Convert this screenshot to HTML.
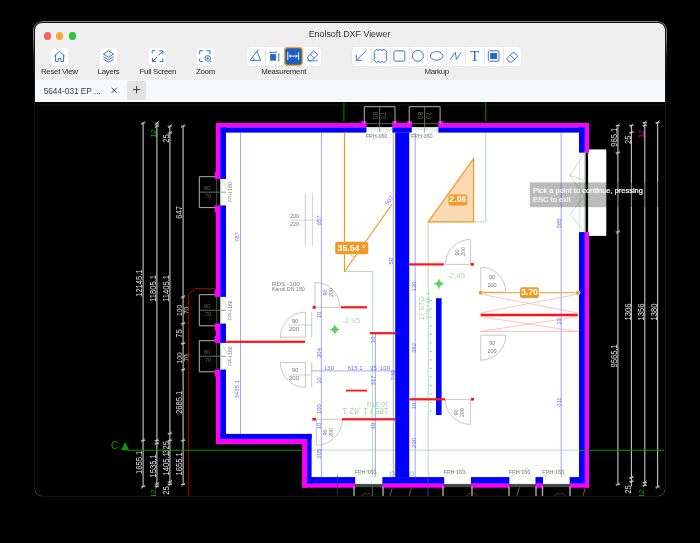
<!DOCTYPE html>
<html><head><meta charset="utf-8">
<style>
html,body{margin:0;padding:0;background:#000;width:700px;height:543px;overflow:hidden;font-family:"Liberation Sans",sans-serif;}
#win{position:absolute;left:35px;top:23.2px;width:630px;height:473.3px;border-radius:7px;background:#EEEFEE;overflow:hidden;box-shadow:0 0 0 0.6px #2a2222;}
#inner{position:absolute;left:-1px;top:-1.2px;width:631px;height:475px;}
#outl{position:absolute;left:33.3px;top:21.3px;width:631.5px;height:60px;border:1px solid #858585;border-bottom:none;border-radius:9px 9px 0 0;-webkit-mask-image:linear-gradient(to bottom,#000 0,#000 25%,rgba(0,0,0,0.25) 60%,rgba(0,0,0,0.0) 100%);}
.abs{position:absolute;}
.dot{position:absolute;width:7.5px;height:7.5px;border-radius:50%;top:10px;}
.title{position:absolute;left:0;width:631px;top:6.6px;text-align:center;font-size:8.9px;color:#303030;}
.tb{position:absolute;top:25.5px;width:17px;height:17.5px;background:#fff;border-radius:3px;}
.lbl{position:absolute;top:45px;font-size:7.9px;letter-spacing:-0.3px;color:#2c2c2c;white-space:nowrap;text-align:center;}
.seg{position:absolute;top:25.3px;height:18.3px;background:#fff;border-radius:4px;box-shadow:0 0 0 0.6px #E2E3E2;}
.sd{position:absolute;top:0;width:1px;height:18px;background:#e6e6e6;}
#tabbar{position:absolute;left:0;top:58.2px;width:631px;height:21.4px;background:#F7F8F9;}
#canvas{position:absolute;left:0;top:79.6px;width:631px;height:396px;background:#000;overflow:hidden;}
svg text{font-family:"Liberation Sans",sans-serif;}
</style></head>
<body>
<div id="outl"></div>
<div id="win"><div id="inner" style="will-change:transform">
  <div class="dot" style="left:9.6px;background:#FE5F57;"></div>
  <div class="dot" style="left:21.9px;background:#F5A838;"></div>
  <div class="dot" style="left:34.5px;background:#27C63F;"></div>
  <div class="title">Enolsoft DXF Viewer</div>

  <div class="tb" style="left:16.7px;"><svg width="17" height="17.5" viewBox="0 0 17 17.5"><path d="M3.6 7.9 L8.4 3.3 L13.4 7.9 M4.6 7 V13.5 H7.1 V10.6 H9.9 V13.5 H12.6 V7" fill="none" stroke="#3a6fd0" stroke-width="1" stroke-linejoin="round" stroke-linecap="round"/></svg></div>
  <div class="lbl" style="left:6.8px;width:37px;">Reset View</div>
  <div class="tb" style="left:66px;"><svg width="17" height="17.5" viewBox="0 0 17 17.5"><path d="M8.5 2.9 L13.6 6.1 L8.5 9.3 L3.4 6.1 Z M3.4 8.6 L8.5 11.8 L13.6 8.6 M3.4 11.1 L8.5 14.3 L13.6 11.1" fill="none" stroke="#3a6fd0" stroke-width="1" stroke-linejoin="round"/></svg></div>
  <div class="lbl" style="left:63.3px;width:22.5px;">Layers</div>
  <div class="tb" style="left:115.3px;"><svg width="17" height="17.5" viewBox="0 0 17 17.5"><path d="M3.2 5.6 V2.6 H6.2 M10.2 2.9 H13.9 V6.5 M13.9 2.9 L9.4 7.4 M3.4 10 V13.6 H7 M3.4 13.6 L7.9 9.1 M13.9 10.4 V13.6 H10.7" fill="none" stroke="#3a6fd0" stroke-width="1"/></svg></div>
  <div class="lbl" style="left:104.9px;width:38px;">Full Screen</div>
  <div class="tb" style="left:163px;"><svg width="17" height="17.5" viewBox="0 0 17 17.5"><path d="M2.7 6.1 V2.7 H6 M9.6 2.7 H13 V6.1 M2.7 10.5 V13.6 H6" fill="none" stroke="#3a6fd0" stroke-width="1"/><circle cx="10.7" cy="10.4" r="2.8" fill="none" stroke="#3a6fd0" stroke-width="1"/><path d="M12.7 12.4 L14.3 14 M9.3 10.4 H12.1 M10.7 9 V11.8" stroke="#3a6fd0" stroke-width="1"/></svg></div>
  <div class="lbl" style="left:161.7px;width:19.6px;">Zoom</div>

  <!-- measurement -->
  <div class="seg" style="left:212.7px;width:74.3px;">
    <div class="sd" style="left:18.3px"></div><div class="sd" style="left:37px"></div><div class="sd" style="left:55.8px"></div>
  </div>
  <div class="lbl" style="left:226.6px;width:46.2px;">Measurement</div>

  <!-- markup -->
  <div class="seg" style="left:318.4px;width:169px;">
    <div class="sd" style="left:18.3px"></div><div class="sd" style="left:37.2px"></div><div class="sd" style="left:56.2px"></div><div class="sd" style="left:74.7px"></div><div class="sd" style="left:94px"></div><div class="sd" style="left:113px"></div><div class="sd" style="left:131.9px"></div><div class="sd" style="left:150.7px"></div>
  </div>
  <div class="lbl" style="left:390.2px;width:25px;">Markup</div>

  <div id="tabbar">
    <div class="abs" style="left:0;top:0;width:92px;height:21.6px;background:#F8F9FA;"></div>
    <div class="abs" style="left:9.7px;top:6.6px;font-size:8.25px;color:#3a3a3a;white-space:nowrap;">5644-031 EP ...</div>
    <svg class="abs" style="left:0;top:0" width="140" height="22" viewBox="34 80 140 22"><path d="M111.7 87.8 L116.7 92.8 M116.7 87.8 L111.7 92.8" stroke="#2a2a2a" stroke-width="0.9"/></svg>
    <div class="abs" style="left:92.7px;top:1px;width:19.1px;height:18.5px;background:#E3E3E3;"></div>
    <svg class="abs" style="left:0;top:0" width="140" height="22" viewBox="34 80 140 22"><path d="M132.9 89.6 H140.3 M136.6 85.9 V93.3" stroke="#2a2a2a" stroke-width="0.9"/></svg>
  </div>
  <div class="abs" style="left:0;top:78.8px;width:631px;height:1px;background:#FFFFFF;"></div>
  <div id="canvas" style="will-change:transform"><svg width="631" height="395.4" viewBox="34 101.6 631 395.4" style="position:absolute;left:0;top:0">
<line x1="35.00" y1="104.70" x2="665.00" y2="104.70" stroke="#1A1A1A" stroke-width="1" />
<polygon points="220.3,126.5 584.8,126.5 584.8,483 307.2,483 307.2,438.6 220.3,438.6" fill="#fff"/>
<rect x="579.00" y="149.00" width="27.30" height="86.50" fill="#fff" />
<line x1="240.50" y1="132.30" x2="240.50" y2="433.50" stroke="#8080FF" stroke-width="0.7" />
<line x1="321.40" y1="132.30" x2="321.40" y2="476.70" stroke="#8080FF" stroke-width="0.7" />
<line x1="393.30" y1="132.30" x2="393.30" y2="476.70" stroke="#8080FF" stroke-width="0.7" />
<line x1="561.20" y1="132.30" x2="561.20" y2="476.70" stroke="#8080FF" stroke-width="0.7" />
<line x1="415.20" y1="132.30" x2="415.20" y2="476.70" stroke="#8080FF" stroke-width="0.7" />
<line x1="375.40" y1="332.00" x2="375.40" y2="476.70" stroke="#8080FF" stroke-width="0.7" />
<line x1="485.80" y1="132.00" x2="485.80" y2="221.40" stroke="#A6D2A6" stroke-width="0.8" />
<line x1="428.20" y1="221.40" x2="486.00" y2="221.40" stroke="#A6D2A6" stroke-width="0.8" />
<line x1="428.20" y1="221.40" x2="428.20" y2="476.70" stroke="#A6D2A6" stroke-width="0.8" />
<line x1="344.50" y1="271.10" x2="373.00" y2="271.10" stroke="#A6D2A6" stroke-width="0.8" />
<line x1="372.60" y1="271.10" x2="372.60" y2="476.70" stroke="#A6D2A6" stroke-width="0.8" />
<line x1="307.20" y1="449.70" x2="584.80" y2="449.70" stroke="#A6D2A6" stroke-width="0.8" />
<line x1="429.70" y1="300.00" x2="432.00" y2="300.00" stroke="#7FBF7F" stroke-width="0.8" />
<line x1="429.70" y1="308.50" x2="432.00" y2="308.50" stroke="#7FBF7F" stroke-width="0.8" />
<line x1="429.70" y1="317.00" x2="432.00" y2="317.00" stroke="#7FBF7F" stroke-width="0.8" />
<line x1="429.70" y1="325.50" x2="432.00" y2="325.50" stroke="#7FBF7F" stroke-width="0.8" />
<line x1="429.70" y1="334.00" x2="432.00" y2="334.00" stroke="#7FBF7F" stroke-width="0.8" />
<line x1="429.70" y1="342.50" x2="432.00" y2="342.50" stroke="#7FBF7F" stroke-width="0.8" />
<line x1="429.70" y1="351.00" x2="432.00" y2="351.00" stroke="#7FBF7F" stroke-width="0.8" />
<line x1="429.70" y1="359.50" x2="432.00" y2="359.50" stroke="#7FBF7F" stroke-width="0.8" />
<line x1="429.70" y1="368.00" x2="432.00" y2="368.00" stroke="#7FBF7F" stroke-width="0.8" />
<line x1="429.70" y1="376.50" x2="432.00" y2="376.50" stroke="#7FBF7F" stroke-width="0.8" />
<line x1="429.70" y1="385.00" x2="432.00" y2="385.00" stroke="#7FBF7F" stroke-width="0.8" />
<line x1="429.70" y1="393.50" x2="432.00" y2="393.50" stroke="#7FBF7F" stroke-width="0.8" />
<line x1="429.70" y1="402.00" x2="432.00" y2="402.00" stroke="#7FBF7F" stroke-width="0.8" />
<line x1="429.70" y1="410.50" x2="432.00" y2="410.50" stroke="#7FBF7F" stroke-width="0.8" />
<line x1="311.60" y1="370.50" x2="395.00" y2="370.50" stroke="#8080FF" stroke-width="0.7" />
<rect x="216.00" y="122.60" width="150.50" height="4.40" fill="#FF00FF" />
<rect x="220.30" y="127.00" width="146.20" height="5.20" fill="#0000FF" />
<rect x="392.30" y="122.60" width="19.50" height="4.40" fill="#FF00FF" />
<rect x="392.30" y="127.00" width="19.50" height="5.20" fill="#0000FF" />
<rect x="438.30" y="122.60" width="150.70" height="4.40" fill="#FF00FF" />
<rect x="438.30" y="127.00" width="146.50" height="5.20" fill="#0000FF" />
<rect x="361.30" y="120.80" width="5.00" height="2.20" fill="#FF00FF" />
<rect x="392.30" y="120.80" width="5.00" height="2.20" fill="#FF00FF" />
<rect x="407.00" y="120.80" width="5.00" height="2.20" fill="#FF00FF" />
<rect x="438.30" y="120.80" width="5.00" height="2.20" fill="#FF00FF" />
<rect x="584.80" y="122.60" width="4.20" height="29.70" fill="#FF00FF" />
<rect x="579.00" y="127.00" width="5.80" height="25.30" fill="#0000FF" />
<rect x="584.80" y="231.70" width="4.20" height="255.60" fill="#FF00FF" />
<rect x="579.00" y="231.70" width="5.80" height="251.30" fill="#0000FF" />
<rect x="216.00" y="122.60" width="4.30" height="55.90" fill="#FF00FF" />
<rect x="220.30" y="127.00" width="5.70" height="51.50" fill="#0000FF" />
<rect x="216.00" y="205.00" width="4.30" height="91.50" fill="#FF00FF" />
<rect x="220.30" y="205.00" width="5.70" height="91.50" fill="#0000FF" />
<rect x="216.00" y="323.20" width="4.30" height="19.30" fill="#FF00FF" />
<rect x="220.30" y="323.20" width="5.70" height="19.30" fill="#0000FF" />
<rect x="216.00" y="369.20" width="4.30" height="74.50" fill="#FF00FF" />
<rect x="220.30" y="369.20" width="5.70" height="69.40" fill="#0000FF" />
<rect x="214.70" y="171.50" width="1.50" height="7.00" fill="#FF00FF" />
<rect x="214.70" y="205.00" width="1.50" height="7.00" fill="#FF00FF" />
<rect x="214.70" y="289.50" width="1.50" height="7.00" fill="#FF00FF" />
<rect x="214.70" y="323.20" width="1.50" height="7.00" fill="#FF00FF" />
<rect x="214.70" y="335.50" width="1.50" height="7.00" fill="#FF00FF" />
<rect x="214.70" y="369.20" width="1.50" height="7.00" fill="#FF00FF" />
<rect x="216.00" y="438.60" width="91.20" height="5.10" fill="#FF00FF" />
<rect x="220.30" y="433.50" width="91.30" height="5.10" fill="#0000FF" />
<rect x="302.10" y="438.60" width="5.10" height="48.70" fill="#FF00FF" />
<rect x="307.20" y="433.50" width="4.40" height="49.50" fill="#0000FF" />
<rect x="302.10" y="483.00" width="53.30" height="4.30" fill="#FF00FF" />
<rect x="307.20" y="476.70" width="48.20" height="6.30" fill="#0000FF" />
<rect x="382.20" y="483.00" width="62.20" height="4.30" fill="#FF00FF" />
<rect x="382.20" y="476.70" width="62.20" height="6.30" fill="#0000FF" />
<rect x="471.00" y="483.00" width="38.60" height="4.30" fill="#FF00FF" />
<rect x="471.00" y="476.70" width="38.60" height="6.30" fill="#0000FF" />
<rect x="535.30" y="483.00" width="7.90" height="4.30" fill="#FF00FF" />
<rect x="535.30" y="476.70" width="7.90" height="6.30" fill="#0000FF" />
<rect x="569.40" y="483.00" width="19.60" height="4.30" fill="#FF00FF" />
<rect x="569.40" y="476.70" width="15.40" height="6.30" fill="#0000FF" />
<rect x="353.60" y="486.00" width="1.80" height="2.30" fill="#FF00FF" />
<rect x="382.20" y="486.00" width="1.80" height="2.30" fill="#FF00FF" />
<rect x="442.60" y="486.00" width="1.80" height="2.30" fill="#FF00FF" />
<rect x="471.00" y="486.00" width="1.80" height="2.30" fill="#FF00FF" />
<rect x="507.80" y="486.00" width="1.80" height="2.30" fill="#FF00FF" />
<rect x="535.30" y="486.00" width="1.80" height="2.30" fill="#FF00FF" />
<rect x="541.40" y="486.00" width="1.80" height="2.30" fill="#FF00FF" />
<rect x="569.40" y="486.00" width="1.80" height="2.30" fill="#FF00FF" />
<rect x="395.20" y="132.00" width="14.00" height="345.00" fill="#0000FF" />
<rect x="436.00" y="297.80" width="5.60" height="116.80" fill="#0000FF" />
<line x1="586.80" y1="152.30" x2="586.80" y2="231.70" stroke="#000" stroke-width="2.6" />
<path d="M584.3 153 L570 175 L584.3 180 M584.3 196 L570 214 L584.3 231 M570 175 L584.3 196" stroke="#A6D2A6" stroke-width="0.7" fill="none" />
<line x1="584.40" y1="152.30" x2="584.40" y2="231.70" stroke="#C8C8C8" stroke-width="0.8" />
<line x1="579.80" y1="152.30" x2="579.80" y2="231.70" stroke="#C8D8C8" stroke-width="0.6" />
<path d="M364.3 123 V106.3 H395 V123" stroke="#B2B2B2" stroke-width="1" fill="none" />
<line x1="365.30" y1="123.20" x2="394.00" y2="123.20" stroke="#5E7E6E" stroke-width="0.8" />
<line x1="379.65" y1="106.30" x2="379.65" y2="132.00" stroke="#6E8E7E" stroke-width="0.8" />
<line x1="366.50" y1="127.20" x2="392.30" y2="127.20" stroke="#B2B2B2" stroke-width="0.6" />
<line x1="366.50" y1="128.70" x2="392.30" y2="128.70" stroke="#A6D2A6" stroke-width="0.6" />
<path d="M366.5 132 L372.5 139 L392.3 128.7" stroke="#A6D2A6" stroke-width="0.6" fill="none" />
<text x="373.15" y="115.00" font-size="6.5" fill="#7A5A5A" text-anchor="middle" transform="rotate(90 373.15 115.00)" >80</text>
<text x="381.15" y="115.00" font-size="6.5" fill="#7A5A5A" text-anchor="middle" transform="rotate(90 381.15 115.00)" >70</text>
<text x="376.50" y="138.00" font-size="5.5" fill="#7A7A7A" text-anchor="middle" >FPH 160</text>
<path d="M409.2 123 V106.3 H440.1 V123" stroke="#B2B2B2" stroke-width="1" fill="none" />
<line x1="410.20" y1="123.20" x2="439.10" y2="123.20" stroke="#5E7E6E" stroke-width="0.8" />
<line x1="424.65" y1="106.30" x2="424.65" y2="132.00" stroke="#6E8E7E" stroke-width="0.8" />
<line x1="411.80" y1="127.20" x2="438.30" y2="127.20" stroke="#B2B2B2" stroke-width="0.6" />
<line x1="411.80" y1="128.70" x2="438.30" y2="128.70" stroke="#A6D2A6" stroke-width="0.6" />
<path d="M411.8 132 L417.8 139 L438.3 128.7" stroke="#A6D2A6" stroke-width="0.6" fill="none" />
<text x="418.15" y="115.00" font-size="6.5" fill="#7A5A5A" text-anchor="middle" transform="rotate(90 418.15 115.00)" >80</text>
<text x="426.15" y="115.00" font-size="6.5" fill="#7A5A5A" text-anchor="middle" transform="rotate(90 426.15 115.00)" >70</text>
<text x="421.80" y="138.00" font-size="5.5" fill="#7A7A7A" text-anchor="middle" >FPH 160</text>
<path d="M215 176.3 H199.3 V207.2 H215" stroke="#B2B2B2" stroke-width="1" fill="none" />
<line x1="199.30" y1="191.75" x2="226.00" y2="191.75" stroke="#6E8E7E" stroke-width="0.8" />
<line x1="216.70" y1="178.50" x2="216.70" y2="205.00" stroke="#4E6E5E" stroke-width="0.8" />
<line x1="220.80" y1="178.50" x2="220.80" y2="205.00" stroke="#C8C8C8" stroke-width="1" />
<path d="M221.5 178.5 L227.5 189.75" stroke="#A6D2A6" stroke-width="0.6" fill="none" />
<text x="207.00" y="189.75" font-size="5.5" fill="#7A5A5A" text-anchor="middle" >80</text>
<text x="208.00" y="197.75" font-size="5.5" fill="#7A5A5A" text-anchor="middle" >70</text>
<text x="232.00" y="191.75" font-size="5" fill="#7A7A7A" text-anchor="middle" transform="rotate(-90 232.00 191.75)" >FPH 160</text>
<path d="M215 294.3 H199.3 V325.4 H215" stroke="#B2B2B2" stroke-width="1" fill="none" />
<line x1="199.30" y1="309.85" x2="226.00" y2="309.85" stroke="#6E8E7E" stroke-width="0.8" />
<line x1="216.70" y1="296.50" x2="216.70" y2="323.20" stroke="#4E6E5E" stroke-width="0.8" />
<line x1="220.80" y1="296.50" x2="220.80" y2="323.20" stroke="#C8C8C8" stroke-width="1" />
<path d="M221.5 296.5 L227.5 307.85" stroke="#A6D2A6" stroke-width="0.6" fill="none" />
<text x="207.00" y="307.85" font-size="5.5" fill="#7A5A5A" text-anchor="middle" >80</text>
<text x="208.00" y="315.85" font-size="5.5" fill="#7A5A5A" text-anchor="middle" >70</text>
<text x="232.00" y="309.85" font-size="5" fill="#7A7A7A" text-anchor="middle" transform="rotate(-90 232.00 309.85)" >FPH 160</text>
<path d="M215 340.3 H199.3 V371.4 H215" stroke="#B2B2B2" stroke-width="1" fill="none" />
<line x1="199.30" y1="355.85" x2="226.00" y2="355.85" stroke="#6E8E7E" stroke-width="0.8" />
<line x1="216.70" y1="342.50" x2="216.70" y2="369.20" stroke="#4E6E5E" stroke-width="0.8" />
<line x1="220.80" y1="342.50" x2="220.80" y2="369.20" stroke="#C8C8C8" stroke-width="1" />
<path d="M221.5 342.5 L227.5 353.85" stroke="#A6D2A6" stroke-width="0.6" fill="none" />
<text x="207.00" y="353.85" font-size="5.5" fill="#7A5A5A" text-anchor="middle" >80</text>
<text x="208.00" y="361.85" font-size="5.5" fill="#7A5A5A" text-anchor="middle" >70</text>
<text x="232.00" y="355.85" font-size="5" fill="#7A7A7A" text-anchor="middle" transform="rotate(-90 232.00 355.85)" >FPH 160</text>
<line x1="143.10" y1="122.70" x2="143.10" y2="486.30" stroke="#C8C8C8" stroke-width="1.1" />
<line x1="156.90" y1="122.70" x2="156.90" y2="486.30" stroke="#C8C8C8" stroke-width="1.1" />
<line x1="169.90" y1="125.70" x2="169.90" y2="484.20" stroke="#C8C8C8" stroke-width="1.1" />
<line x1="183.10" y1="125.70" x2="183.10" y2="484.20" stroke="#C8C8C8" stroke-width="1.1" />
<line x1="140.90" y1="122.70" x2="145.30" y2="122.70" stroke="#C8C8C8" stroke-width="0.9" />
<path d="M141.29999999999998 124.5 L144.9 120.9" stroke="#C8C8C8" stroke-width="0.9" fill="none" />
<line x1="154.70" y1="122.70" x2="159.10" y2="122.70" stroke="#C8C8C8" stroke-width="0.9" />
<path d="M155.1 124.5 L158.70000000000002 120.9" stroke="#C8C8C8" stroke-width="0.9" fill="none" />
<line x1="154.70" y1="125.70" x2="159.10" y2="125.70" stroke="#C8C8C8" stroke-width="0.9" />
<path d="M155.1 127.5 L158.70000000000002 123.9" stroke="#C8C8C8" stroke-width="0.9" fill="none" />
<line x1="167.70" y1="125.70" x2="172.10" y2="125.70" stroke="#C8C8C8" stroke-width="0.9" />
<path d="M168.1 127.5 L171.70000000000002 123.9" stroke="#C8C8C8" stroke-width="0.9" fill="none" />
<line x1="167.70" y1="132.60" x2="172.10" y2="132.60" stroke="#C8C8C8" stroke-width="0.9" />
<path d="M168.1 134.4 L171.70000000000002 130.79999999999998" stroke="#C8C8C8" stroke-width="0.9" fill="none" />
<line x1="180.90" y1="125.70" x2="185.30" y2="125.70" stroke="#C8C8C8" stroke-width="0.9" />
<path d="M181.29999999999998 127.5 L184.9 123.9" stroke="#C8C8C8" stroke-width="0.9" fill="none" />
<line x1="180.90" y1="296.60" x2="185.30" y2="296.60" stroke="#C8C8C8" stroke-width="0.9" />
<path d="M181.29999999999998 298.40000000000003 L184.9 294.8" stroke="#C8C8C8" stroke-width="0.9" fill="none" />
<line x1="180.90" y1="323.30" x2="185.30" y2="323.30" stroke="#C8C8C8" stroke-width="0.9" />
<path d="M181.29999999999998 325.1 L184.9 321.5" stroke="#C8C8C8" stroke-width="0.9" fill="none" />
<line x1="180.90" y1="343.00" x2="185.30" y2="343.00" stroke="#C8C8C8" stroke-width="0.9" />
<path d="M181.29999999999998 344.8 L184.9 341.2" stroke="#C8C8C8" stroke-width="0.9" fill="none" />
<line x1="180.90" y1="369.30" x2="185.30" y2="369.30" stroke="#C8C8C8" stroke-width="0.9" />
<path d="M181.29999999999998 371.1 L184.9 367.5" stroke="#C8C8C8" stroke-width="0.9" fill="none" />
<line x1="180.90" y1="440.00" x2="185.30" y2="440.00" stroke="#C8C8C8" stroke-width="0.9" />
<path d="M181.29999999999998 441.8 L184.9 438.2" stroke="#C8C8C8" stroke-width="0.9" fill="none" />
<line x1="167.70" y1="433.00" x2="172.10" y2="433.00" stroke="#C8C8C8" stroke-width="0.9" />
<path d="M168.1 434.8 L171.70000000000002 431.2" stroke="#C8C8C8" stroke-width="0.9" fill="none" />
<line x1="167.70" y1="440.00" x2="172.10" y2="440.00" stroke="#C8C8C8" stroke-width="0.9" />
<path d="M168.1 441.8 L171.70000000000002 438.2" stroke="#C8C8C8" stroke-width="0.9" fill="none" />
<line x1="140.90" y1="440.00" x2="145.30" y2="440.00" stroke="#C8C8C8" stroke-width="0.9" />
<path d="M141.29999999999998 441.8 L144.9 438.2" stroke="#C8C8C8" stroke-width="0.9" fill="none" />
<line x1="154.70" y1="440.00" x2="159.10" y2="440.00" stroke="#C8C8C8" stroke-width="0.9" />
<path d="M155.1 441.8 L158.70000000000002 438.2" stroke="#C8C8C8" stroke-width="0.9" fill="none" />
<line x1="154.70" y1="443.00" x2="159.10" y2="443.00" stroke="#C8C8C8" stroke-width="0.9" />
<path d="M155.1 444.8 L158.70000000000002 441.2" stroke="#C8C8C8" stroke-width="0.9" fill="none" />
<line x1="140.90" y1="486.30" x2="145.30" y2="486.30" stroke="#C8C8C8" stroke-width="0.9" />
<path d="M141.29999999999998 488.1 L144.9 484.5" stroke="#C8C8C8" stroke-width="0.9" fill="none" />
<line x1="154.70" y1="486.30" x2="159.10" y2="486.30" stroke="#C8C8C8" stroke-width="0.9" />
<path d="M155.1 488.1 L158.70000000000002 484.5" stroke="#C8C8C8" stroke-width="0.9" fill="none" />
<line x1="154.70" y1="483.50" x2="159.10" y2="483.50" stroke="#C8C8C8" stroke-width="0.9" />
<path d="M155.1 485.3 L158.70000000000002 481.7" stroke="#C8C8C8" stroke-width="0.9" fill="none" />
<line x1="167.70" y1="484.20" x2="172.10" y2="484.20" stroke="#C8C8C8" stroke-width="0.9" />
<path d="M168.1 486.0 L171.70000000000002 482.4" stroke="#C8C8C8" stroke-width="0.9" fill="none" />
<line x1="167.70" y1="481.50" x2="172.10" y2="481.50" stroke="#C8C8C8" stroke-width="0.9" />
<path d="M168.1 483.3 L171.70000000000002 479.7" stroke="#C8C8C8" stroke-width="0.9" fill="none" />
<line x1="180.90" y1="484.20" x2="185.30" y2="484.20" stroke="#C8C8C8" stroke-width="0.9" />
<path d="M181.29999999999998 486.0 L184.9 482.4" stroke="#C8C8C8" stroke-width="0.9" fill="none" />
<text x="142.30" y="282.70" font-size="8.588" fill="#E2E2E2" text-anchor="middle" transform="rotate(-90 142.30 282.70)" textLength="27.47" lengthAdjust="spacingAndGlyphs">12145.1</text>
<text x="142.30" y="462.00" font-size="8.588" fill="#E2E2E2" text-anchor="middle" transform="rotate(-90 142.30 462.00)" textLength="23.24" lengthAdjust="spacingAndGlyphs">1655.1</text>
<text x="156.10" y="288.00" font-size="8.588" fill="#E2E2E2" text-anchor="middle" transform="rotate(-90 156.10 288.00)" textLength="26.91" lengthAdjust="spacingAndGlyphs">11805.1</text>
<text x="156.10" y="465.50" font-size="8.588" fill="#E2E2E2" text-anchor="middle" transform="rotate(-90 156.10 465.50)" textLength="23.24" lengthAdjust="spacingAndGlyphs">1535.1</text>
<text x="156.10" y="133.00" font-size="7.2" fill="#00B000" text-anchor="middle" transform="rotate(-90 156.10 133.00)" >12</text>
<text x="156.10" y="493.00" font-size="7.2" fill="#00B000" text-anchor="middle" transform="rotate(-90 156.10 493.00)" >12</text>
<text x="169.10" y="138.00" font-size="8.588" fill="#E2E2E2" text-anchor="middle" transform="rotate(-90 169.10 138.00)" textLength="8.45" lengthAdjust="spacingAndGlyphs">25</text>
<text x="169.10" y="288.00" font-size="8.588" fill="#E2E2E2" text-anchor="middle" transform="rotate(-90 169.10 288.00)" textLength="26.91" lengthAdjust="spacingAndGlyphs">11405.1</text>
<text x="169.10" y="447.00" font-size="8.588" fill="#E2E2E2" text-anchor="middle" transform="rotate(-90 169.10 447.00)" textLength="12.68" lengthAdjust="spacingAndGlyphs">325</text>
<text x="169.10" y="463.50" font-size="8.588" fill="#E2E2E2" text-anchor="middle" transform="rotate(-90 169.10 463.50)" textLength="23.24" lengthAdjust="spacingAndGlyphs">1405.1</text>
<text x="169.10" y="490.00" font-size="8.588" fill="#E2E2E2" text-anchor="middle" transform="rotate(-90 169.10 490.00)" textLength="8.45" lengthAdjust="spacingAndGlyphs">25</text>
<text x="182.30" y="212.00" font-size="8.588" fill="#E2E2E2" text-anchor="middle" transform="rotate(-90 182.30 212.00)" textLength="12.68" lengthAdjust="spacingAndGlyphs">647</text>
<text x="181.80" y="310.00" font-size="7.457999999999999" fill="#E2E2E2" text-anchor="middle" transform="rotate(-90 181.80 310.00)" textLength="11.01" lengthAdjust="spacingAndGlyphs">100</text>
<text x="189.50" y="310.00" font-size="7.457999999999999" fill="#E2E2E2" text-anchor="middle" transform="rotate(-90 189.50 310.00)" textLength="7.34" lengthAdjust="spacingAndGlyphs">70</text>
<text x="182.30" y="333.00" font-size="8.588" fill="#E2E2E2" text-anchor="middle" transform="rotate(-90 182.30 333.00)" textLength="8.45" lengthAdjust="spacingAndGlyphs">75</text>
<text x="181.80" y="357.50" font-size="7.457999999999999" fill="#E2E2E2" text-anchor="middle" transform="rotate(-90 181.80 357.50)" textLength="11.01" lengthAdjust="spacingAndGlyphs">100</text>
<text x="189.50" y="357.50" font-size="7.457999999999999" fill="#E2E2E2" text-anchor="middle" transform="rotate(-90 189.50 357.50)" textLength="7.34" lengthAdjust="spacingAndGlyphs">70</text>
<text x="182.30" y="402.00" font-size="8.588" fill="#E2E2E2" text-anchor="middle" transform="rotate(-90 182.30 402.00)" textLength="23.24" lengthAdjust="spacingAndGlyphs">2685.1</text>
<text x="182.30" y="463.50" font-size="8.588" fill="#E2E2E2" text-anchor="middle" transform="rotate(-90 182.30 463.50)" textLength="23.24" lengthAdjust="spacingAndGlyphs">1655.1</text>
<line x1="617.90" y1="125.00" x2="617.90" y2="484.00" stroke="#C8C8C8" stroke-width="1.1" />
<line x1="631.40" y1="125.00" x2="631.40" y2="486.00" stroke="#C8C8C8" stroke-width="1.1" />
<line x1="644.80" y1="122.00" x2="644.80" y2="485.00" stroke="#C8C8C8" stroke-width="1.1" />
<line x1="657.60" y1="122.00" x2="657.60" y2="486.60" stroke="#C8C8C8" stroke-width="1.1" />
<line x1="615.70" y1="125.00" x2="620.10" y2="125.00" stroke="#C8C8C8" stroke-width="0.9" />
<path d="M616.1 126.8 L619.6999999999999 123.2" stroke="#C8C8C8" stroke-width="0.9" fill="none" />
<line x1="615.70" y1="152.30" x2="620.10" y2="152.30" stroke="#C8C8C8" stroke-width="0.9" />
<path d="M616.1 154.10000000000002 L619.6999999999999 150.5" stroke="#C8C8C8" stroke-width="0.9" fill="none" />
<line x1="615.70" y1="231.50" x2="620.10" y2="231.50" stroke="#C8C8C8" stroke-width="0.9" />
<path d="M616.1 233.3 L619.6999999999999 229.7" stroke="#C8C8C8" stroke-width="0.9" fill="none" />
<line x1="615.70" y1="484.00" x2="620.10" y2="484.00" stroke="#C8C8C8" stroke-width="0.9" />
<path d="M616.1 485.8 L619.6999999999999 482.2" stroke="#C8C8C8" stroke-width="0.9" fill="none" />
<line x1="629.20" y1="125.00" x2="633.60" y2="125.00" stroke="#C8C8C8" stroke-width="0.9" />
<path d="M629.6 126.8 L633.1999999999999 123.2" stroke="#C8C8C8" stroke-width="0.9" fill="none" />
<line x1="629.20" y1="132.00" x2="633.60" y2="132.00" stroke="#C8C8C8" stroke-width="0.9" />
<path d="M629.6 133.8 L633.1999999999999 130.2" stroke="#C8C8C8" stroke-width="0.9" fill="none" />
<line x1="629.20" y1="477.20" x2="633.60" y2="477.20" stroke="#C8C8C8" stroke-width="0.9" />
<path d="M629.6 479.0 L633.1999999999999 475.4" stroke="#C8C8C8" stroke-width="0.9" fill="none" />
<line x1="629.20" y1="481.00" x2="633.60" y2="481.00" stroke="#C8C8C8" stroke-width="0.9" />
<path d="M629.6 482.8 L633.1999999999999 479.2" stroke="#C8C8C8" stroke-width="0.9" fill="none" />
<line x1="642.60" y1="122.00" x2="647.00" y2="122.00" stroke="#C8C8C8" stroke-width="0.9" />
<path d="M643.0 123.8 L646.5999999999999 120.2" stroke="#C8C8C8" stroke-width="0.9" fill="none" />
<line x1="642.60" y1="125.00" x2="647.00" y2="125.00" stroke="#C8C8C8" stroke-width="0.9" />
<path d="M643.0 126.8 L646.5999999999999 123.2" stroke="#C8C8C8" stroke-width="0.9" fill="none" />
<line x1="642.60" y1="482.00" x2="647.00" y2="482.00" stroke="#C8C8C8" stroke-width="0.9" />
<path d="M643.0 483.8 L646.5999999999999 480.2" stroke="#C8C8C8" stroke-width="0.9" fill="none" />
<line x1="642.60" y1="485.00" x2="647.00" y2="485.00" stroke="#C8C8C8" stroke-width="0.9" />
<path d="M643.0 486.8 L646.5999999999999 483.2" stroke="#C8C8C8" stroke-width="0.9" fill="none" />
<line x1="655.40" y1="122.00" x2="659.80" y2="122.00" stroke="#C8C8C8" stroke-width="0.9" />
<path d="M655.8000000000001 123.8 L659.4 120.2" stroke="#C8C8C8" stroke-width="0.9" fill="none" />
<line x1="655.40" y1="486.60" x2="659.80" y2="486.60" stroke="#C8C8C8" stroke-width="0.9" />
<path d="M655.8000000000001 488.40000000000003 L659.4 484.8" stroke="#C8C8C8" stroke-width="0.9" fill="none" />
<text x="617.10" y="136.80" font-size="8.588" fill="#E2E2E2" text-anchor="middle" transform="rotate(-90 617.10 136.80)" textLength="19.02" lengthAdjust="spacingAndGlyphs">965.1</text>
<text x="617.10" y="355.50" font-size="8.588" fill="#E2E2E2" text-anchor="middle" transform="rotate(-90 617.10 355.50)" textLength="23.24" lengthAdjust="spacingAndGlyphs">9565.1</text>
<text x="630.60" y="139.40" font-size="8.588" fill="#E2E2E2" text-anchor="middle" transform="rotate(-90 630.60 139.40)" textLength="8.45" lengthAdjust="spacingAndGlyphs">25</text>
<text x="630.60" y="311.60" font-size="8.588" fill="#E2E2E2" text-anchor="middle" transform="rotate(-90 630.60 311.60)" textLength="16.91" lengthAdjust="spacingAndGlyphs">1306</text>
<text x="630.60" y="489.00" font-size="8.588" fill="#E2E2E2" text-anchor="middle" transform="rotate(-90 630.60 489.00)" textLength="8.45" lengthAdjust="spacingAndGlyphs">25</text>
<text x="644.00" y="133.50" font-size="7.2" fill="#C000C0" text-anchor="middle" transform="rotate(-90 644.00 133.50)" >12</text>
<text x="644.00" y="311.60" font-size="8.588" fill="#E2E2E2" text-anchor="middle" transform="rotate(-90 644.00 311.60)" textLength="16.91" lengthAdjust="spacingAndGlyphs">1356</text>
<text x="644.00" y="493.00" font-size="7.2" fill="#00B000" text-anchor="middle" transform="rotate(-90 644.00 493.00)" >12</text>
<text x="656.80" y="311.60" font-size="8.588" fill="#E2E2E2" text-anchor="middle" transform="rotate(-90 656.80 311.60)" textLength="16.91" lengthAdjust="spacingAndGlyphs">1380</text>
<path d="M188.3 497 V294.7 L194.6 288.3 H215.5" stroke="#B00000" stroke-width="1" fill="none" />
<line x1="128.30" y1="449.80" x2="302.10" y2="449.80" stroke="#00A000" stroke-width="1.1" />
<line x1="579.00" y1="449.80" x2="664.00" y2="449.80" stroke="#00A000" stroke-width="1.1" />
<polygon points="125.2,441.7 121.2,449.9 129.1,449.9" fill="#00A000"/>
<text x="114.50" y="448.60" font-size="10" fill="#00A000" text-anchor="middle" >C</text>
<line x1="343.90" y1="102.00" x2="343.90" y2="121.00" stroke="#00A000" stroke-width="0.9" />
<line x1="485.80" y1="102.00" x2="485.80" y2="121.00" stroke="#00A000" stroke-width="0.9" />
<path d="M305.4 311.7 V336.7 H280.4 A25 25 0 0 1 305.4 311.7" stroke="#B2B2B2" stroke-width="0.7" fill="none" />
<path d="M305.4 387 V362 H280.4 A25 25 0 0 0 305.4 387" stroke="#B2B2B2" stroke-width="0.7" fill="none" />
<path d="M315 282 V307 H340 A25 25 0 0 0 315 282" stroke="#B2B2B2" stroke-width="0.7" fill="none" />
<path d="M316.3 444.9 V418.9 H342.3 A26 26 0 0 1 316.3 444.9" stroke="#B2B2B2" stroke-width="0.7" fill="none" />
<path d="M470.4 239 V264 H445.4 A25 25 0 0 1 470.4 239" stroke="#B2B2B2" stroke-width="0.7" fill="none" />
<path d="M480.8 266.8 V291.8 H505.8 A25 25 0 0 0 480.8 266.8" stroke="#B2B2B2" stroke-width="0.7" fill="none" />
<path d="M480.8 359.8 V334.8 H505.8 A25 25 0 0 1 480.8 359.8" stroke="#B2B2B2" stroke-width="0.7" fill="none" />
<path d="M470.4 424 V399 H445.4 A25 25 0 0 0 470.4 424" stroke="#B2B2B2" stroke-width="0.7" fill="none" />
<text x="295.00" y="322.50" font-size="6" fill="#7A7A7A" text-anchor="middle" >90</text>
<text x="294.00" y="331.00" font-size="6" fill="#7A7A7A" text-anchor="middle" >200</text>
<text x="295.00" y="371.50" font-size="6" fill="#7A7A7A" text-anchor="middle" >90</text>
<text x="294.00" y="380.00" font-size="6" fill="#7A7A7A" text-anchor="middle" >200</text>
<line x1="311.70" y1="312.00" x2="311.70" y2="337.00" stroke="#B2B2B2" stroke-width="0.7" />
<line x1="311.70" y1="362.00" x2="311.70" y2="387.00" stroke="#B2B2B2" stroke-width="0.7" />
<line x1="288.40" y1="324.60" x2="311.70" y2="324.60" stroke="#A6D2A6" stroke-width="0.7" />
<line x1="288.40" y1="374.50" x2="311.70" y2="374.50" stroke="#A6D2A6" stroke-width="0.7" />
<text x="459.00" y="252.00" font-size="5.5" fill="#7A7A7A" text-anchor="middle" transform="rotate(-90 459.00 252.00)" >90</text>
<text x="465.00" y="251.00" font-size="5.5" fill="#7A7A7A" text-anchor="middle" transform="rotate(-90 465.00 251.00)" >200</text>
<text x="492.00" y="279.00" font-size="5.5" fill="#7A7A7A" text-anchor="middle" >90</text>
<text x="492.00" y="287.00" font-size="5.5" fill="#7A7A7A" text-anchor="middle" >200</text>
<text x="492.00" y="345.00" font-size="5.5" fill="#7A7A7A" text-anchor="middle" >90</text>
<text x="492.00" y="353.00" font-size="5.5" fill="#7A7A7A" text-anchor="middle" >200</text>
<text x="458.00" y="412.00" font-size="5.5" fill="#7A7A7A" text-anchor="middle" transform="rotate(-90 458.00 412.00)" >90</text>
<text x="464.00" y="412.00" font-size="5.5" fill="#7A7A7A" text-anchor="middle" transform="rotate(-90 464.00 412.00)" >200</text>
<text x="327.00" y="292.00" font-size="5.5" fill="#7A7A7A" text-anchor="middle" transform="rotate(-90 327.00 292.00)" >90</text>
<text x="333.00" y="292.00" font-size="5.5" fill="#7A7A7A" text-anchor="middle" transform="rotate(-90 333.00 292.00)" >200</text>
<text x="327.00" y="432.00" font-size="5.5" fill="#7A7A7A" text-anchor="middle" transform="rotate(-90 327.00 432.00)" >90</text>
<text x="333.00" y="432.00" font-size="5.5" fill="#7A7A7A" text-anchor="middle" transform="rotate(-90 333.00 432.00)" >200</text>
<rect x="225.60" y="340.30" width="79.50" height="2.20" fill="#FF1414" />
<rect x="341.00" y="305.80" width="26.00" height="2.20" fill="#FF1414" />
<rect x="312.60" y="305.40" width="3.00" height="3.00" fill="#FF1414" />
<rect x="369.90" y="331.70" width="25.30" height="2.20" fill="#FF1414" />
<rect x="346.00" y="389.30" width="21.00" height="1.80" fill="#FF1414" />
<rect x="342.00" y="417.80" width="53.30" height="2.20" fill="#FF1414" />
<rect x="312.30" y="417.60" width="3.70" height="2.60" fill="#FF1414" />
<rect x="409.00" y="262.90" width="34.80" height="2.20" fill="#FF1414" />
<rect x="470.80" y="262.60" width="3.00" height="2.80" fill="#FF1414" />
<rect x="409.40" y="397.80" width="35.60" height="2.20" fill="#FF1414" />
<rect x="471.00" y="397.60" width="3.00" height="2.60" fill="#FF1414" />
<rect x="480.60" y="313.35" width="97.10" height="2.50" fill="#FF1414" />
<line x1="480.60" y1="293.70" x2="577.70" y2="312.60" stroke="#FF9A9A" stroke-width="0.6" />
<line x1="480.60" y1="312.60" x2="577.70" y2="293.70" stroke="#FF9A9A" stroke-width="0.6" />
<line x1="480.60" y1="316.30" x2="577.70" y2="331.10" stroke="#FF9A9A" stroke-width="0.6" />
<line x1="480.60" y1="331.10" x2="577.70" y2="316.30" stroke="#FF9A9A" stroke-width="0.6" />
<line x1="480.60" y1="331.10" x2="577.70" y2="331.10" stroke="#FF9A9A" stroke-width="0.6" />
<text x="271.80" y="285.50" font-size="5.8" fill="#7A7A7A" text-anchor="start" textLength="28" lengthAdjust="spacingAndGlyphs">RDS -100</text>
<text x="271.80" y="290.40" font-size="5.8" fill="#7A7A7A" text-anchor="start" textLength="33" lengthAdjust="spacingAndGlyphs">Kanal DN 150</text>
<line x1="305.20" y1="192.60" x2="305.20" y2="245.20" stroke="#B2B2B2" stroke-width="0.6" />
<line x1="312.40" y1="192.60" x2="312.40" y2="245.20" stroke="#B2B2B2" stroke-width="0.6" />
<line x1="290.00" y1="219.80" x2="318.00" y2="219.80" stroke="#B2B2B2" stroke-width="0.6" />
<text x="294.50" y="218.00" font-size="5.5" fill="#7A7A7A" text-anchor="middle" >200</text>
<text x="294.50" y="225.50" font-size="5.5" fill="#7A7A7A" text-anchor="middle" >220</text>
<text x="239.40" y="236.80" font-size="6" fill="#6A6AFF" text-anchor="middle" transform="rotate(-90 239.40 236.80)" >787</text>
<text x="239.40" y="389.00" font-size="6" fill="#6A6AFF" text-anchor="middle" transform="rotate(-90 239.40 389.00)" >3435.1</text>
<text x="321.00" y="220.00" font-size="6" fill="#6A6AFF" text-anchor="middle" transform="rotate(-90 321.00 220.00)" >657</text>
<text x="321.00" y="314.50" font-size="6" fill="#6A6AFF" text-anchor="middle" transform="rotate(-90 321.00 314.50)" >10</text>
<text x="321.00" y="352.60" font-size="6" fill="#6A6AFF" text-anchor="middle" transform="rotate(-90 321.00 352.60)" >304</text>
<text x="321.00" y="380.00" font-size="6" fill="#6A6AFF" text-anchor="middle" transform="rotate(-90 321.00 380.00)" >10</text>
<text x="321.00" y="408.70" font-size="6" fill="#6A6AFF" text-anchor="middle" transform="rotate(-90 321.00 408.70)" >100</text>
<text x="321.00" y="425.50" font-size="6" fill="#6A6AFF" text-anchor="middle" transform="rotate(-90 321.00 425.50)" >10</text>
<text x="321.00" y="453.30" font-size="6" fill="#6A6AFF" text-anchor="middle" transform="rotate(-90 321.00 453.30)" >205</text>
<text x="391.00" y="201.00" font-size="6" fill="#6A6AFF" text-anchor="middle" transform="rotate(-55 391.00 201.00)" >507</text>
<text x="393.00" y="260.70" font-size="6" fill="#6A6AFF" text-anchor="middle" transform="rotate(-90 393.00 260.70)" >50</text>
<text x="416.00" y="286.00" font-size="6" fill="#6A6AFF" text-anchor="middle" transform="rotate(-90 416.00 286.00)" >120</text>
<text x="416.00" y="347.50" font-size="6" fill="#6A6AFF" text-anchor="middle" transform="rotate(-90 416.00 347.50)" >382</text>
<text x="416.00" y="405.50" font-size="6" fill="#6A6AFF" text-anchor="middle" transform="rotate(-90 416.00 405.50)" >10</text>
<text x="416.00" y="442.50" font-size="6" fill="#6A6AFF" text-anchor="middle" transform="rotate(-90 416.00 442.50)" >290</text>
<text x="375.00" y="339.40" font-size="6" fill="#6A6AFF" text-anchor="middle" transform="rotate(-90 375.00 339.40)" >10</text>
<text x="375.00" y="380.00" font-size="6" fill="#6A6AFF" text-anchor="middle" transform="rotate(-90 375.00 380.00)" >317</text>
<text x="375.00" y="425.50" font-size="6" fill="#6A6AFF" text-anchor="middle" transform="rotate(-90 375.00 425.50)" >10</text>
<text x="395.00" y="375.00" font-size="6" fill="#6A6AFF" text-anchor="middle" transform="rotate(-90 395.00 375.00)" >749</text>
<text x="560.60" y="223.00" font-size="6" fill="#6A6AFF" text-anchor="middle" transform="rotate(-90 560.60 223.00)" >685</text>
<text x="560.60" y="401.70" font-size="6" fill="#6A6AFF" text-anchor="middle" transform="rotate(-90 560.60 401.70)" >611</text>
<text x="560.60" y="321.00" font-size="6" fill="#6A6AFF" text-anchor="middle" transform="rotate(-90 560.60 321.00)" >10</text>
<text x="329.00" y="369.60" font-size="6" fill="#6A6AFF" text-anchor="middle" >130</text>
<text x="355.00" y="369.60" font-size="6" fill="#6A6AFF" text-anchor="middle" >615.1</text>
<text x="373.50" y="369.60" font-size="6" fill="#6A6AFF" text-anchor="middle" >25</text>
<text x="385.00" y="369.60" font-size="6" fill="#6A6AFF" text-anchor="middle" >100</text>
<text x="351.00" y="323.00" font-size="8" fill="#A8E6A8" text-anchor="middle" >-2,95</text>
<text x="456.00" y="277.50" font-size="8" fill="#A8E6A8" text-anchor="middle" >-2,45</text>
<polygon points="331.3,329.2 334.8,325.7 338.3,329.2 334.8,332.7" fill="#7CE07C" stroke="#3CB03C" stroke-width="0.6"/>
<line x1="329.80" y1="329.20" x2="339.80" y2="329.20" stroke="#3CB03C" stroke-width="0.6" />
<line x1="334.80" y1="324.20" x2="334.80" y2="334.20" stroke="#3CB03C" stroke-width="0.6" />
<polygon points="435.5,283.4 439,279.9 442.5,283.4 439,286.9" fill="#7CE07C" stroke="#3CB03C" stroke-width="0.6"/>
<line x1="434.00" y1="283.40" x2="444.00" y2="283.40" stroke="#3CB03C" stroke-width="0.6" />
<line x1="439.00" y1="278.40" x2="439.00" y2="288.40" stroke="#3CB03C" stroke-width="0.6" />
<text x="424.00" y="308.00" font-size="7" fill="#A6D2A6" text-anchor="middle" transform="rotate(-90 424.00 308.00)" >17 STG</text>
<text x="430.00" y="305.00" font-size="6" fill="#A6D2A6" text-anchor="middle" transform="rotate(-90 430.00 305.00)" >175 / 28.1</text>
<text x="388.60" y="407.20" font-size="9" fill="#A6D2A6" text-anchor="start" transform="rotate(180 388.60 407.20)" textLength="46" lengthAdjust="spacingAndGlyphs">185 / 1 ,82  1</text>
<text x="388.60" y="401.20" font-size="7.8" fill="#A6D2A6" text-anchor="start" transform="rotate(180 388.60 401.20)" textLength="22" lengthAdjust="spacingAndGlyphs">16 STG</text>
<line x1="344.50" y1="132.30" x2="344.50" y2="271.10" stroke="#F29A26" stroke-width="1.2" />
<line x1="344.50" y1="271.10" x2="392.20" y2="203.60" stroke="#F29A26" stroke-width="1.2" />
<path d="M349.9 254.3 Q352 256 353.6 256.4" stroke="#F29A26" stroke-width="0.7" fill="none" />
<polygon points="428.2,221.4 473.6,158.2 473.6,221.4" fill="#FBD9B2" stroke="#F29A26" stroke-width="1.2"/>
<line x1="480.60" y1="292.30" x2="577.70" y2="292.30" stroke="#F29A26" stroke-width="1" />
<circle cx="480.6" cy="292.3" r="2.3" fill="#F29A26" stroke="#fff" stroke-width="0.6"/>
<circle cx="577.7" cy="292.3" r="2.3" fill="#F29A26" stroke="#fff" stroke-width="0.6"/>
<rect x="335.2" y="241.3" width="33.10" height="12.50" rx="2.2" fill="#F29A26"/>
<text x="351.50" y="250.70" font-size="8.8" font-weight="bold" fill="#fff" text-anchor="middle">35.54 °</text>
<rect x="448.5" y="194.2" width="18.80" height="10.90" rx="2.2" fill="#F29A26"/>
<text x="457.90" y="202.00" font-size="8.8" font-weight="bold" fill="#fff" text-anchor="middle">2.06</text>
<rect x="520" y="286.9" width="18.90" height="10.80" rx="2.2" fill="#F29A26"/>
<text x="529.45" y="294.60" font-size="8.8" font-weight="bold" fill="#fff" text-anchor="middle">3.70</text>
<line x1="354.00" y1="486.00" x2="354.00" y2="497.00" stroke="#A8A8A8" stroke-width="1.4" />
<line x1="383.00" y1="486.00" x2="383.00" y2="497.00" stroke="#A8A8A8" stroke-width="1.4" />
<line x1="443.00" y1="486.00" x2="443.00" y2="497.00" stroke="#A8A8A8" stroke-width="1.4" />
<line x1="472.00" y1="486.00" x2="472.00" y2="497.00" stroke="#A8A8A8" stroke-width="1.4" />
<line x1="509.00" y1="486.00" x2="509.00" y2="497.00" stroke="#A8A8A8" stroke-width="1.4" />
<line x1="536.00" y1="486.00" x2="536.00" y2="497.00" stroke="#A8A8A8" stroke-width="1.4" />
<line x1="542.50" y1="486.00" x2="542.50" y2="497.00" stroke="#A8A8A8" stroke-width="1.4" />
<line x1="570.00" y1="486.00" x2="570.00" y2="497.00" stroke="#A8A8A8" stroke-width="1.4" />
<line x1="389.50" y1="497.00" x2="392.50" y2="487.00" stroke="#A04040" stroke-width="1" />
<line x1="408.50" y1="497.00" x2="411.50" y2="487.00" stroke="#A04040" stroke-width="1" />
<line x1="516.50" y1="497.00" x2="519.50" y2="487.00" stroke="#A04040" stroke-width="1" />
<line x1="582.50" y1="497.00" x2="585.50" y2="487.00" stroke="#A04040" stroke-width="1" />
<line x1="372.60" y1="476.70" x2="372.60" y2="497.00" stroke="#2E8B2E" stroke-width="0.9" />
<line x1="428.00" y1="476.70" x2="428.00" y2="497.00" stroke="#4040C0" stroke-width="0.9" />
<path d="M361 497 Q364 491 367 494 Q370 491 373 497" stroke="#704848" stroke-width="0.8" fill="none" />
<path d="M466 497 Q469 491 472 494 Q475 491 478 497" stroke="#704848" stroke-width="0.8" fill="none" />
<path d="M554 497 Q557 491 560 494 Q563 491 566 497" stroke="#704848" stroke-width="0.8" fill="none" />
<circle cx="392.5" cy="473.5" r="2.2" fill="none" stroke="#909090" stroke-width="0.6"/>
<circle cx="411.5" cy="473.5" r="2.2" fill="none" stroke="#909090" stroke-width="0.6"/>
<rect x="355.40" y="476.70" width="26.80" height="6.90" fill="#fff" />
<line x1="355.40" y1="483.80" x2="382.20" y2="483.80" stroke="#B2B2B2" stroke-width="0.7" />
<rect x="355.40" y="484.30" width="26.80" height="2.50" fill="#3E4A44" />
<path d="M355.4 476 L374.2 468 L378.2 476" stroke="#A6D2A6" stroke-width="0.6" fill="none" />
<text x="365.40" y="474.00" font-size="5.5" fill="#7A7A7A" text-anchor="middle" >FPH 160</text>
<rect x="444.40" y="476.70" width="26.60" height="6.90" fill="#fff" />
<line x1="444.40" y1="483.80" x2="471.00" y2="483.80" stroke="#B2B2B2" stroke-width="0.7" />
<rect x="444.40" y="484.30" width="26.60" height="2.50" fill="#3E4A44" />
<path d="M444.4 476 L463 468 L467 476" stroke="#A6D2A6" stroke-width="0.6" fill="none" />
<text x="454.40" y="474.00" font-size="5.5" fill="#7A7A7A" text-anchor="middle" >FPH 160</text>
<rect x="509.60" y="476.70" width="25.70" height="6.90" fill="#fff" />
<line x1="509.60" y1="483.80" x2="535.30" y2="483.80" stroke="#B2B2B2" stroke-width="0.7" />
<rect x="509.60" y="484.30" width="25.70" height="2.50" fill="#3E4A44" />
<path d="M509.6 476 L527.3 468 L531.3 476" stroke="#A6D2A6" stroke-width="0.6" fill="none" />
<text x="519.60" y="474.00" font-size="5.5" fill="#7A7A7A" text-anchor="middle" >FPH 160</text>
<rect x="543.20" y="476.70" width="26.20" height="6.90" fill="#fff" />
<line x1="543.20" y1="483.80" x2="569.40" y2="483.80" stroke="#B2B2B2" stroke-width="0.7" />
<rect x="543.20" y="484.30" width="26.20" height="2.50" fill="#3E4A44" />
<path d="M543.2 476 L561.4 468 L565.4 476" stroke="#A6D2A6" stroke-width="0.6" fill="none" />
<text x="553.20" y="474.00" font-size="5.5" fill="#7A7A7A" text-anchor="middle" >FPH 160</text>
<line x1="337.40" y1="475.00" x2="337.40" y2="497.00" stroke="#3030A0" stroke-width="0.8" />
<rect x="529.8" y="182" width="136" height="24.8" fill="rgba(8,4,4,0.27)"/>
<text x="533.10" y="192.70" font-size="7.5" fill="#F8F8F8" text-anchor="start" stroke="#F8F8F8" stroke-width="0.25">Pick a point to continue, pressing</text>
<text x="533.10" y="201.60" font-size="7.5" fill="#F8F8F8" text-anchor="start" stroke="#F8F8F8" stroke-width="0.25">ESC to exit</text>
</svg></div></div>
</div>
<svg width="700" height="110" viewBox="0 0 700 110" style="position:absolute;left:0;top:0" fill="none" stroke="#2E64C8" stroke-width="0.9">
<!-- measurement icons -->
<path d="M250.1 60.4 H260.7 L257 51.6 M250.1 60.4 L258.4 49.3" stroke-linejoin="round"/>
<path d="M252.2 57.6 A4 4 0 0 1 254.3 60.4" stroke-width="0.8"/>
<rect x="270.1" y="54.1" width="6" height="6.6" fill="#2E64C8" stroke="none"/>
<path d="M270.1 52.4 H276.1 M270.1 51.2 V52.6 M276.1 51.2 V52.6 M278.8 54.1 V60.7 M278.1 54.1 H279.5 M278.1 60.7 H279.5" stroke-width="0.9"/>
<rect x="284.6" y="47.6" width="17.7" height="17.7" rx="3" fill="#1F5FBF" stroke="#F5A623" stroke-width="1.3"/>
<path d="M287.8 52.1 V60.1 M298.6 52.1 V60.1 M289 56.1 H297.4 M289 56.1 L291 54.9 M289 56.1 L291 57.3 M297.4 56.1 L295.4 54.9 M297.4 56.1 L295.4 57.3" stroke="#E8EEF8" stroke-width="1"/>
<path d="M307.2 57.3 L313.7 51 L317.7 54.7 L311.4 61 L309.5 61 Z M310.3 54.3 L314.3 58.1" stroke-linejoin="round"/>
<path d="M306.8 60.8 H317.8" stroke-width="0.7"/>
<!-- markup icons -->
<path d="M366.3 50.6 L356.3 60.4 M356.3 54.8 V60.4 H361.8"/>
<path d="M375.2 50.9 a1.73 1.39 0 0 1 3.47 0 a1.73 1.39 0 0 1 3.47 0 a1.73 1.39 0 0 1 3.47 0 a1.33 1.67 0 0 1 0 3.33 a1.33 1.67 0 0 1 0 3.33 a1.33 1.67 0 0 1 0 3.33 a1.73 1.39 0 0 1 -3.47 0 a1.73 1.39 0 0 1 -3.47 0 a1.73 1.39 0 0 1 -3.47 0 a1.33 1.67 0 0 1 0 -3.33 a1.33 1.67 0 0 1 0 -3.33 a1.33 1.67 0 0 1 0 -3.33 Z" stroke-width="0.85"/>
<rect x="393.9" y="50.8" width="10.9" height="10.4" rx="1.5"/>
<circle cx="417.9" cy="55.8" r="5.5"/>
<ellipse cx="436.7" cy="55.9" rx="6.3" ry="4.3"/>
<path d="M450 59.6 L455.4 52.3 L456.4 59.6 L461.1 52.3"/>
<rect x="488.3" y="50.8" width="10.6" height="10.4" rx="1"/>
<rect x="490.2" y="52.9" width="6.8" height="6.2" fill="#2E64C8" stroke="none"/>
<path d="M506.8 58.6 L513.4 52 L518 56.3 L511.6 62 L509 62 Z M510.2 55.2 L514.6 59.4" stroke-linejoin="round"/>
</svg>
<svg width="700" height="110" viewBox="0 0 700 110" style="position:absolute;left:0;top:0"><text x="474.6" y="61" style="font-family:'Liberation Serif'" font-size="14.5" fill="#2563C0" text-anchor="middle">T</text></svg>
</body></html>
